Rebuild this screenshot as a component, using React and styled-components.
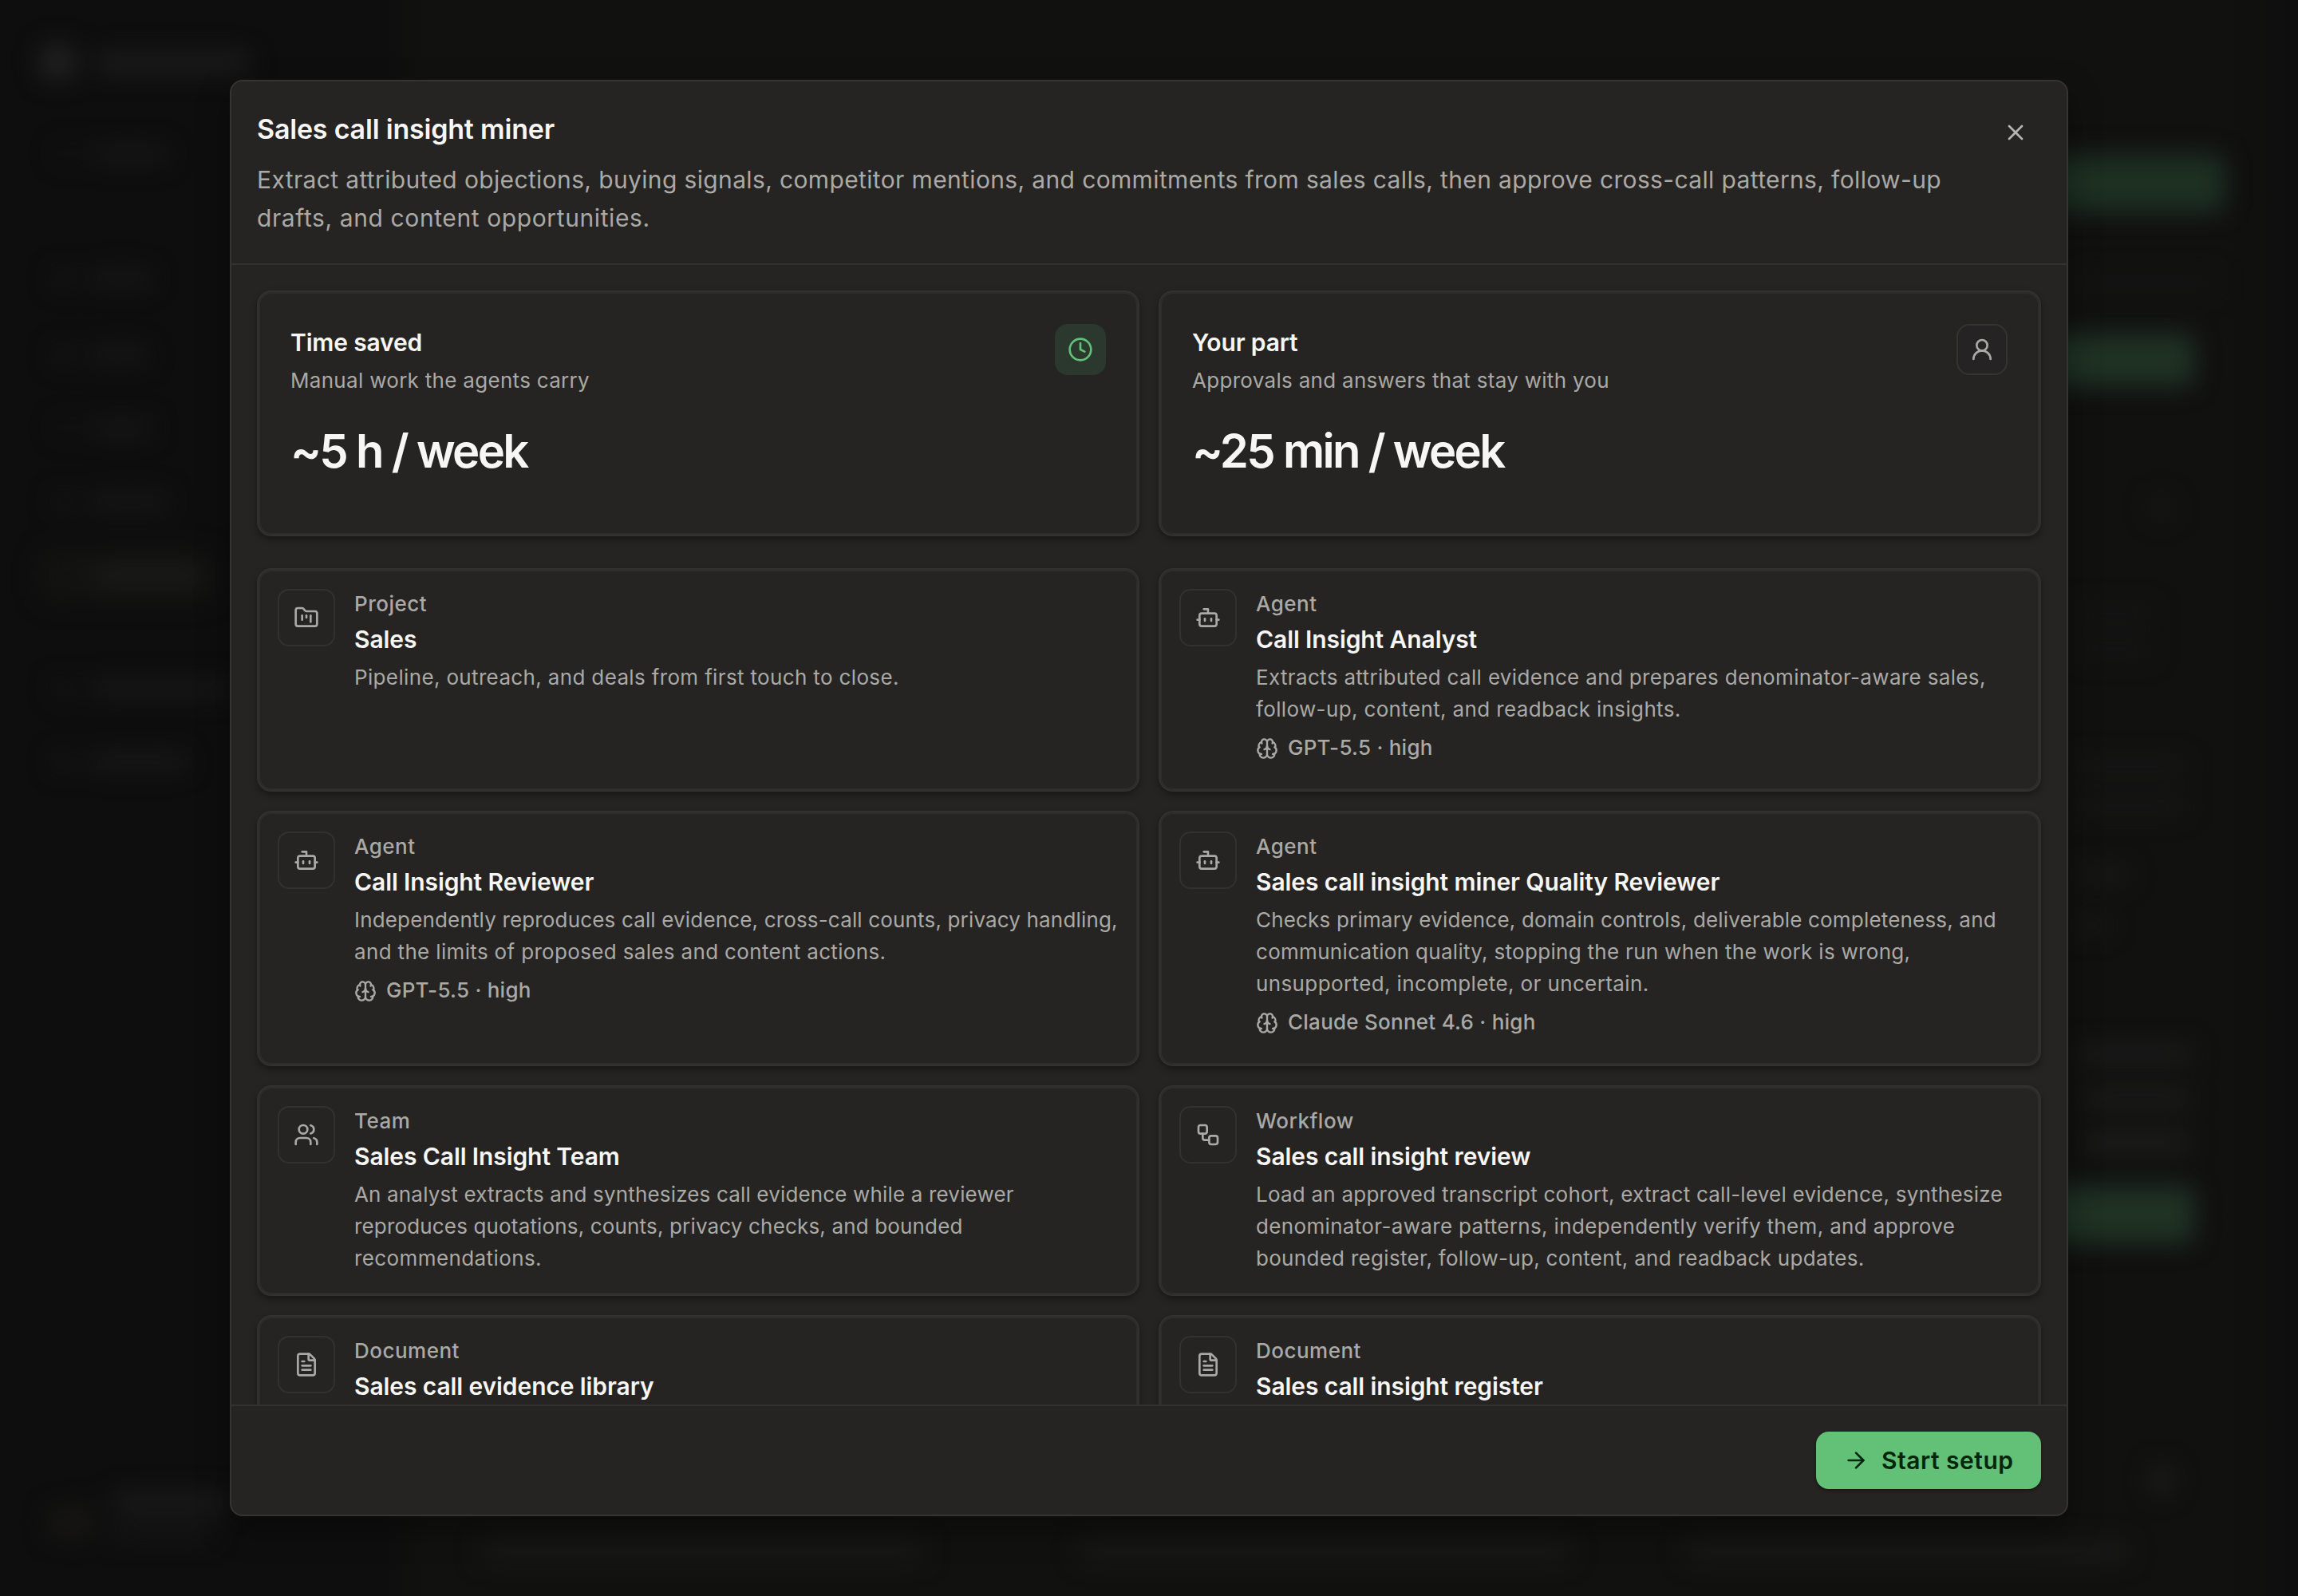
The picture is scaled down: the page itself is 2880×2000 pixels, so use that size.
import React from 'react';
import styled, { createGlobalStyle } from 'styled-components';
import {
    ArrowRight,
    Bot,
    Brain,
    Clock,
    FileText,
    FolderKanban,
    UserRound,
    Users,
    Workflow,
    X,
} from 'lucide-react';

// every line is [text, letter spacing in px]
const items = [
    {
        kind: 'Project',
        icon: FolderKanban,
        title: 'Sales',
        lines: [['Pipeline, outreach, and deals from first touch to close.', 0.35]],
    },
    {
        kind: 'Agent',
        icon: Bot,
        title: 'Call Insight Analyst',
        lines: [
            ['Extracts attributed call evidence and prepares denominator-aware sales,', 0.34],
            ['follow-up, content, and readback insights.', 0.36],
        ],
        model: 'GPT-5.5 · high',
    },
    {
        kind: 'Agent',
        icon: Bot,
        title: 'Call Insight Reviewer',
        lines: [
            ['Independently reproduces call evidence, cross-call counts, privacy handling,', 0.16],
            ['and the limits of proposed sales and content actions.', 0.34],
        ],
        model: 'GPT-5.5 · high',
    },
    {
        kind: 'Agent',
        icon: Bot,
        title: 'Sales call insight miner Quality Reviewer',
        lines: [
            ['Checks primary evidence, domain controls, deliverable completeness, and', 0.18],
            ['communication quality, stopping the run when the work is wrong,', 0.3],
            ['unsupported, incomplete, or uncertain.', 0.38],
        ],
        model: 'Claude Sonnet 4.6 · high',
    },
    {
        kind: 'Team',
        icon: Users,
        title: 'Sales Call Insight Team',
        lines: [
            ['An analyst extracts and synthesizes call evidence while a reviewer', 0.16],
            ['reproduces quotations, counts, privacy checks, and bounded', 0.16],
            ['recommendations.', 0.4],
        ],
    },
    {
        kind: 'Workflow',
        icon: Workflow,
        title: 'Sales call insight review',
        lines: [
            ['Load an approved transcript cohort, extract call-level evidence, synthesize', 0.23],
            ['denominator-aware patterns, independently verify them, and approve', 0.34],
            ['bounded register, follow-up, content, and readback updates.', 0.3],
        ],
    },
    { kind: 'Document', icon: FileText, title: 'Sales call evidence library', lines: [] },
    { kind: 'Document', icon: FileText, title: 'Sales call insight register', lines: [] },
];

const Lines = ({ lines }) =>
    lines.map(([text, tracking]) => (
        <Line key={text} $tracking={tracking}>
            {text}
        </Line>
    ));

const StatCard = ({ title, hint, value, icon: Icon, accent }) => (
    <Stat>
        <StatTop>
            <div>
                <StatTitle>{title}</StatTitle>
                <StatHint>{hint}</StatHint>
            </div>
            <StatIcon $accent={accent}>
                <Icon size={32} strokeWidth={2} />
            </StatIcon>
        </StatTop>
        <StatValue>{value}</StatValue>
    </Stat>
);

const ItemCard = ({ kind, title, lines, model, icon: Icon }) => (
    <Item>
        <ItemIcon>
            <Icon size={32} strokeWidth={2} />
        </ItemIcon>
        <ItemContent>
            <Kind>{kind}</Kind>
            <ItemTitle>{title}</ItemTitle>
            <ItemText>
                <Lines lines={lines} />
            </ItemText>
            {model && (
                <Model>
                    <Brain size={28} strokeWidth={2} />
                    {model}
                </Model>
            )}
        </ItemContent>
    </Item>
);

const App = () => (
    <>
        <GlobalStyle />
        <Screen>
            <Backdrop>
                {smudges.map(([x, y, w, h, color], i) => (
                    <Smudge key={i} $x={x} $y={y} $w={w} $h={h} $color={color} />
                ))}
            </Backdrop>
            <Dialog>
                <Header>
                    <div>
                        <Title>Sales call insight miner</Title>
                        <Description>
                            <Lines
                                lines={[
                                    [
                                        'Extract attributed objections, buying signals, competitor mentions, and commitments from sales calls, then approve cross-call patterns, follow-up',
                                        0.36,
                                    ],
                                    ['drafts, and content opportunities.', 0.6],
                                ]}
                            />
                        </Description>
                    </div>
                    <Close aria-label="Close">
                        <X size={32} strokeWidth={2} />
                    </Close>
                </Header>
                <Body>
                    <Grid>
                        <StatCard
                            title="Time saved"
                            hint="Manual work the agents carry"
                            value="~5 h / week"
                            icon={Clock}
                            accent
                        />
                        <StatCard
                            title="Your part"
                            hint="Approvals and answers that stay with you"
                            value="~25 min / week"
                            icon={UserRound}
                        />
                    </Grid>
                    <Grid>
                        {items.map(item => (
                            <ItemCard key={item.title} {...item} />
                        ))}
                    </Grid>
                </Body>
                <Footer>
                    <Start>
                        <ArrowRight size={32} strokeWidth={2} />
                        Start setup
                    </Start>
                </Footer>
            </Dialog>
        </Screen>
    </>
);

export default App;

// x, y, width, height and colour of the page parts that glow through the overlay
const smudges = [
    [50, 56, 44, 44, '#212121'],
    [118, 66, 196, 26, '#1c1c1c'],
    [70, 182, 20, 20, '#131313'],
    [112, 182, 100, 22, '#171717'],
    [66, 338, 28, 22, '#161616'],
    [112, 338, 80, 22, '#171717'],
    [66, 434, 28, 22, '#161616'],
    [112, 434, 74, 22, '#171717'],
    [70, 526, 20, 20, '#131313'],
    [112, 526, 80, 22, '#171717'],
    [66, 618, 28, 22, '#141414'],
    [112, 618, 100, 22, '#171717'],
    [50, 692, 220, 60, '#131312'],
    [120, 708, 130, 26, '#1b1b1a'],
    [66, 852, 28, 22, '#141414'],
    [112, 852, 180, 22, '#181818'],
    [66, 944, 28, 22, '#161616'],
    [112, 944, 124, 22, '#191919'],
    [60, 1890, 60, 36, '#171614'],
    [140, 1870, 150, 26, '#1a1a1a'],
    [140, 1910, 130, 20, '#151515'],
    [2400, 194, 388, 72, '#1d3022'],
    [2400, 418, 350, 66, '#1f3224'],
    [2400, 1486, 350, 72, '#1f3224'],
    [2600, 344, 180, 20, '#141414'],
    [2694, 624, 30, 26, '#181818'],
    [2600, 758, 100, 20, '#151515'],
    [2600, 804, 100, 20, '#151515'],
    [2600, 950, 140, 20, '#171717'],
    [2600, 1000, 140, 20, '#171717'],
    [2600, 1086, 70, 20, '#191919'],
    [2600, 1150, 44, 20, '#191919'],
    [2600, 1310, 150, 22, '#1b1b1b'],
    [2610, 1366, 136, 22, '#1c1c1c'],
    [2610, 1420, 136, 24, '#1d1d1d'],
    [2694, 1836, 30, 36, '#1c1c1c'],
    [600, 1932, 560, 24, '#191919'],
    [1350, 1932, 620, 24, '#191919'],
    [2110, 1932, 560, 24, '#191919'],
];

const GlobalStyle = createGlobalStyle`
    * {
        box-sizing: border-box;
    }

    body {
        margin: 0;
        background: #0e0e0e;
        font-family: Inter, 'Liberation Sans', sans-serif;
    }
`;

const Screen = styled.div`
    position: relative;
    width: 2880px;
    height: 2000px;
    overflow: hidden;
    display: flex;
    align-items: center;
    justify-content: center;
    background: linear-gradient(90deg, #0e0e0e 480px, #111110 540px, #111110 2780px, #0e0e0e 2880px);
`;

const Backdrop = styled.div`
    position: absolute;
    inset: 0;
    filter: blur(15px);
`;

const Smudge = styled.div`
    position: absolute;
    left: ${props => props.$x}px;
    top: ${props => props.$y}px;
    width: ${props => props.$w}px;
    height: ${props => props.$h}px;
    border-radius: 12px;
    background: ${props => props.$color};
`;

const Dialog = styled.div`
    position: relative;
    width: 2304px;
    height: 1800px;
    display: flex;
    flex-direction: column;
    overflow: hidden;
    border: 2px solid #353432;
    border-radius: 16px;
    background: #252422;
    box-shadow: 0 16px 40px rgba(0, 0, 0, 0.35);
`;

const Header = styled.div`
    flex: none;
    height: 230px;
    padding: 32px;
    display: flex;
    justify-content: space-between;
    border-bottom: 2px solid #32312f;
`;

const Line = styled.span`
    display: block;
    white-space: nowrap;
    letter-spacing: ${props => props.$tracking}px;
`;

const Title = styled.h2`
    margin: 8px 0 19px;
    color: #f7f6f4;
    font-size: 34px;
    line-height: 40px;
    font-weight: 600;
    letter-spacing: -0.2px;
`;

const Description = styled.div`
    color: #aaa9a6;
    font-size: 30px;
    line-height: 48px;
`;

const Close = styled.button`
    width: 64px;
    height: 64px;
    padding: 0;
    display: flex;
    align-items: center;
    justify-content: center;
    border: 0;
    background: none;
    color: #b5b4b1;
`;

const Body = styled.div`
    flex: 1;
    min-height: 0;
    overflow: hidden;
    padding: 32px 32px 0;
    display: flex;
    flex-direction: column;
    gap: 40px;
`;

const Grid = styled.div`
    flex: none;
    display: grid;
    grid-template-columns: repeat(2, minmax(0, 1fr));
    gap: 24px;
`;

const Card = styled.div`
    border: 2px solid #32312f;
    border-radius: 18px;
    background: #252422;
    box-shadow:
        inset 0 0 0 2px #2e2d2b,
        inset 0 2px 2px rgba(255, 255, 255, 0.04),
        0 4px 8px rgba(0, 0, 0, 0.36);
`;

const Stat = styled(Card)`
    height: 308px;
    padding: 40px;
`;

const StatTop = styled.div`
    display: flex;
    justify-content: space-between;
`;

const StatTitle = styled.div`
    padding-top: 1px;
    color: #f7f6f4;
    font-size: 30px;
    line-height: 44px;
    font-weight: 600;
    letter-spacing: -0.15px;
`;

const StatHint = styled.div`
    margin-top: 6px;
    color: #aaa9a6;
    font-size: 26px;
    line-height: 40px;
    letter-spacing: 0.3px;
`;

const StatIcon = styled.div`
    width: 64px;
    height: 64px;
    display: flex;
    align-items: center;
    justify-content: center;
    border: 2px solid ${props => (props.$accent ? '#2b382d' : '#343331')};
    border-radius: 16px;
    background: ${props => (props.$accent ? '#2b382d' : '#252324')};
    color: ${props => (props.$accent ? '#63c077' : '#aaa9a6')};
`;

const StatValue = styled.div`
    margin-top: 32px;
    color: #f7f6f4;
    font-size: 58px;
    line-height: 72px;
    font-weight: 600;
    letter-spacing: -2.7px;
`;

const Item = styled(Card)`
    display: flex;
    gap: 24px;
    padding: 24px;
`;

const ItemIcon = styled.div`
    flex: none;
    width: 72px;
    height: 72px;
    display: flex;
    align-items: center;
    justify-content: center;
    border: 2px solid #32312f;
    border-radius: 14px;
    color: #aaa9a6;
`;

const ItemContent = styled.div`
    margin: -1px 0 1px;
    min-width: 0;
`;

const Kind = styled.div`
    color: #aaa9a6;
    font-size: 26px;
    line-height: 40px;
    font-weight: 500;
    letter-spacing: 0.5px;
`;

const ItemTitle = styled.div`
    color: #f7f6f4;
    font-size: 30px;
    line-height: 48px;
    font-weight: 600;
    letter-spacing: -0.1px;
    white-space: nowrap;
`;

const ItemText = styled.div`
    margin-top: 4px;
    color: #aaa9a6;
    font-size: 26px;
    line-height: 40px;
`;

const Model = styled.div`
    margin: 8px 0;
    display: flex;
    align-items: center;
    gap: 12px;
    color: #aaa9a6;
    font-size: 26px;
    line-height: 40px;
    font-weight: 500;
    letter-spacing: 0.25px;

    svg {
        margin-top: 1px;
    }
`;

const Footer = styled.div`
    flex: none;
    height: 138px;
    padding: 32px;
    display: flex;
    justify-content: flex-end;
    border-top: 2px solid #32312f;
`;

const Start = styled.button`
    width: 282px;
    height: 72px;
    padding: 0 0 1px 34px;
    display: flex;
    align-items: center;
    gap: 16px;
    border: 0;
    border-radius: 16px;
    background: #63c077;
    box-shadow: 0 2px 4px rgba(0, 0, 0, 0.4);
    color: #04260c;
    font-family: inherit;
    font-size: 30px;
    font-weight: 600;
    letter-spacing: 0.5px;
    white-space: nowrap;
`;
